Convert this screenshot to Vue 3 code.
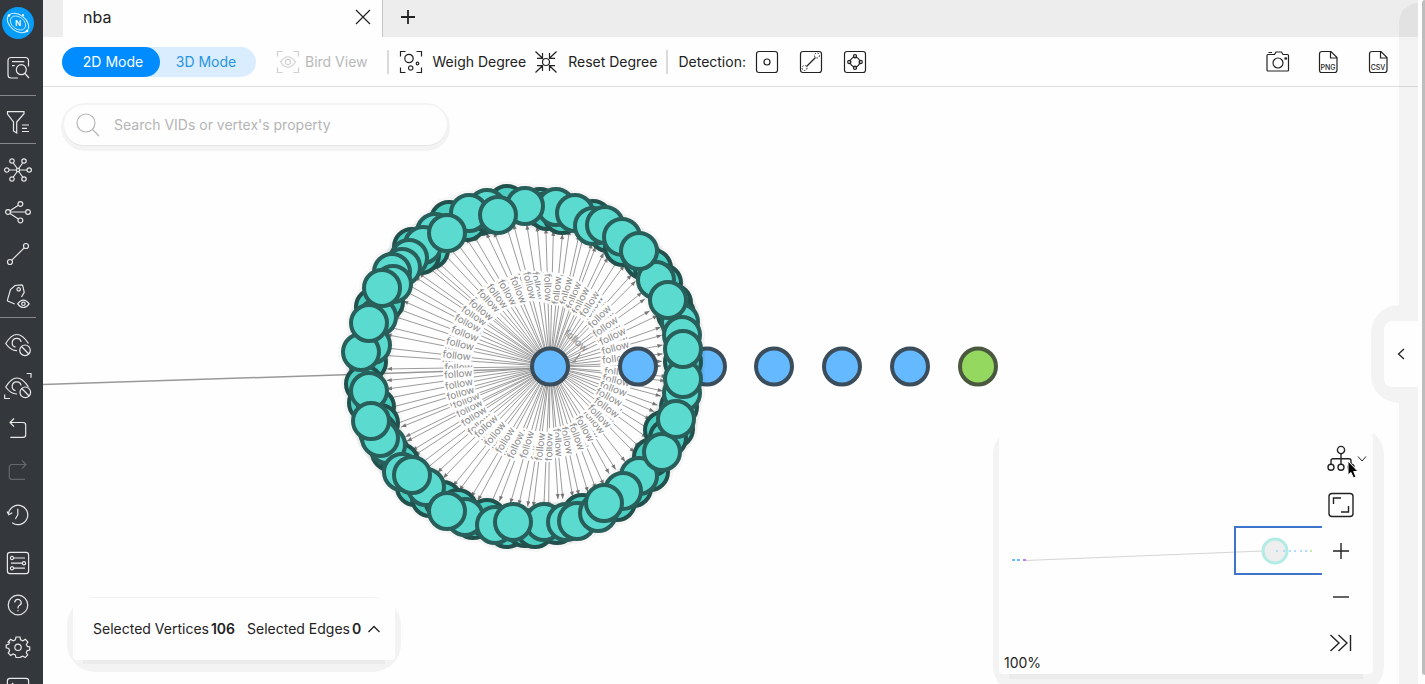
<script setup>
import { ref } from 'vue'

const search = ref('')

const c = (x, y, r) => `M${x - r} ${y}a${r} ${r} 0 1 0 ${2 * r} 0a${r} ${r} 0 1 0 ${-2 * r} 0`

const sideGroups = [
  [
    {
      label: 'Query',
      paths: ['M26.5 14.5V8.5a3 3 0 0 0-3-3H9a3 3 0 0 0-3 3V23a3 3 0 0 0 3 3h7', 'M10 9.7h12.3M10 13.7h2.7', c(19.3, 17.7, 5), 'M23 21.5l4 4.5'],
    },
  ],
  [{ label: 'Filter', paths: ['M5.5 5.7H22v2L14.7 16v11l-3.2-2V16L5.5 8z', 'M20 19h7M20 22.3h5M20 25.5h7'] }],
  [
    {
      label: 'Expand',
      paths: [c(10, 7, 2.2), c(22, 7, 2.2), c(4.8, 16, 2.2), c(27.2, 16, 2.2), c(10, 25, 2.2), c(22, 25, 2.2), c(16, 16, 1.6), 'M7 16h7.4M17.6 16H25M11.3 9l4 5.5M20.7 9l-4 5.5M11.3 23l4-5.5M20.7 23l-4-5.5'],
    },
    { label: 'Common neighbors', paths: [c(6, 16, 2.4), c(18.4, 8, 2.4), c(26, 16, 2.4), c(18.4, 24.4, 2.4), 'M8.4 16h15.2M8 14.7l8.4-5.4M8 17.4l8.4 5.6'] },
    { label: 'Find path', paths: [c(24, 8, 2.5), c(8, 24, 2.5), 'M22.2 9.8L9.8 22.2'] },
    {
      label: 'Vertex style',
      paths: ['M12.7 24l-6.5-2.7a1 1 0 0 1-.7-1.4L8.5 9.5 13 5.5l6.7-.7q1 0 1.1 1l1.4 6.5-2.7 4.7', c(16.7, 9.3, 1.7), 'M15.6 23.8q5.8-7.4 11.6 0q-5.8 7.4-11.6 0z', c(21.4, 23.8, 1.7)],
    },
  ],
  [
    {
      label: 'Hide selected',
      paths: ['M15 22.6C10.5 22.8 6.5 19.5 3.7 15.5Q14.7-2.5 26.5 15.5', 'M13.5 19.2a4.5 4.5 0 1 1 5.6-5.2', c(23, 22.3, 5.3), 'M19.5 18.5l7.3 7.5'],
    },
    {
      label: 'Hide unselected',
      paths: ['M15 24C10.5 24 6.5 21 3.7 17Q14.7-1 26.5 17', 'M13.5 20.7a4.5 4.5 0 1 1 5.6-5.2', c(23.3, 22.3, 5.3), 'M19.8 18.5l7.3 7.5', 'M24.7 3.5H29v4.3M2.7 24.5v4H8'],
    },
    { label: 'Undo', paths: ['M12 6.5l-4 4 4 4.2M8 10.5h13q2.7 0 2.7 2.7v9.5q0 2.7-2.7 2.7H8.3'] },
    { label: 'Redo', dim: true, paths: ['M20 6.5l4 4-4 4.2M24 10.5H10q-2.7 0-2.7 2.7v9.5q0 2.7 2.7 2.7h13'] },
  ],
  [
    { label: 'History', paths: ['M6.4 15a9.7 9.7 0 1 1 3.8 8.7', 'M5 12.5l1.8 3.2 3.5-2', 'M15.8 9.7v6l-2.4 4.3'] },
  ],
  [
    { label: 'Snapshots', paths: ['M8 5.4h16q2.6 0 2.6 2.6v16q0 2.6-2.6 2.6H8q-2.6 0-2.6-2.6V8q0-2.6 2.6-2.6z', c(10, 11, 1.6), c(22, 16.2, 1.6), c(10, 21.2, 1.6), 'M11.6 11H23M9 16.2h11.4M11.6 21.2H23'] },
    { label: 'Help', paths: [c(16, 16, 9.8), 'M12.8 13.6a3.2 3.2 0 1 1 4.8 2.7q-1.6.9-1.6 2.5v.6', 'M16 21v1.2'] },
    {
      label: 'Settings',
      paths: ['M14 6h4l.6 2.8 2.3 1 2.5-1.5 2.5 2.7-1.5 2.4.9 2 2.4.6v3l-2.5.6-.9 2.1 1.4 2.3-2.5 2.6-2.4-1.5-2.2 1L18 26.5h-4l-.7-2.5-2.2-1-2.4 1.5-2.5-2.6 1.4-2.3-.9-2.1-2.5-.6v-3l2.5-.6.9-2L6.1 11l2.5-2.7 2.5 1.5 2.3-1z', c(16, 16.3, 3.2)],
    },
    { label: 'Console', paths: ['M8 5.4h16q2.6 0 2.6 2.6v16q0 2.6-2.6 2.6H8q-2.6 0-2.6-2.6V8q0-2.6 2.6-2.6z', 'M10 10l3 3-3 3'] },
  ],
]

const box = 'M8 5.5h16q2.5 0 2.5 2.5v16q0 2.5-2.5 2.5H8q-2.5 0-2.5-2.5V8q0-2.5 2.5-2.5z'
const corners = 'M5.5 10.5v-5h5M21.5 5.5h5v5M26.5 21.5v5h-5M10.5 26.5h-5v-5'
const icons = {
  bird: [corners, 'M8.5 16q7.5-10.5 15 0q-7.5 10.5-15 0z', c(16, 16, 2.6)],
  weigh: [corners, c(14, 12.5, 4.2), c(22.5, 17.5, 1.3), c(15.7, 22, 2.2)],
  reset: [c(16, 16, 3.5), 'M5.5 5.5l7 6.8M12.5 7v5.3H7M26.5 5.5l-7 6.8M19.5 7v5.3H25M5.5 26.5l7-6.8M12.5 25v-5.3H7M26.5 26.5l-7-6.8M19.5 25v-5.3H25'],
  isolated: [box, c(16, 16, 3)],
  edge: [box, 'M11.5 20.5l9-9'],
  loop: [box, c(16, 16, 4.8), c(16, 10.3, 1.6), c(16, 21.7, 1.6), c(10.3, 16, 1.6), c(21.7, 16, 1.6)],
  camera: ['M12.5 8.5l1.5-2.5h5.5l1.5 2.5h4.5a1 1 0 0 1 1 1V24a1 1 0 0 1-1 1H6a1 1 0 0 1-1-1V9.5a1 1 0 0 1 1-1zM6.5 6.5H10', c(16, 17, 5), 'M23 12h1.5v1H23z'],
  file: ['M9.5 5.5h9.5l6 6V24q0 2.5-2.5 2.5h-13Q7.5 26.5 7.5 24V8q0-2.5 2.5-2.5zM18.5 6v6H25'],
  fit: ['M7 4.5h18q3 0 3 3v17q0 3-3 3H7q-3 0-3-3v-17q0-3 3-3z', 'M8.5 15V9h7.5M23.5 17v6H16'],
  plus: ['M8 16h16M16 8v16'],
  minus: ['M8 16h16'],
  collapse: ['M5.5 8l8.5 8-8.5 8M13.5 8l8.5 8-8.5 8M25.5 8v16'],
  close: ['M9 9l14 14M23 9L9 23'],
  tree: [c(16, 7, 3.6), c(6, 24.3, 3), c(16, 24.3, 3), c(26, 24.3, 3), 'M16 10.6v10.7M6 21.3v-3.5q0-2 2-2h16q2 0 2 2v3.5'],
}

const detections = [
  { key: 'isolated', label: 'Isolated vertices' },
  { key: 'edge', label: 'Dangling edges' },
  { key: 'loop', label: 'Loops' },
]

const hub = [550, 366.5]
const back = [
  [507, 204], [480, 216], [467, 222], [449, 220], [412, 247], [430, 250], [385, 302], [374, 307], [368, 362],
  [364, 384], [367, 403], [376, 407], [380, 423], [390, 452], [400, 462], [415, 487], [430, 498], [443, 500],
  [458, 508], [473, 520], [487, 518], [507, 529], [525, 528], [535, 529], [557, 525], [582, 513], [617, 502],
  [633, 488], [650, 472], [652, 457], [663, 430], [675, 429], [679, 407], [540, 207], [547, 211], [562, 215],
  [593, 219], [608, 233], [623, 247], [643, 260], [653, 268], [663, 283], [673, 303], [676, 314], [683, 362],
  [378, 432], [668, 438], [490, 214], [421, 255],
]
const front = [
  [487, 208], [469, 213], [435, 232], [423, 245], [409, 258], [402, 267], [392, 272], [393, 284], [378, 317],
  [372, 345], [361, 352], [369, 323], [382, 288], [447, 233], [556, 207], [525, 206], [498, 215], [575, 213],
  [593, 226], [605, 225], [622, 237], [656, 280], [639, 251], [680, 322], [668, 300], [682, 335], [682, 393],
  [683, 379], [683, 349], [369, 391], [387, 445], [380, 438], [371, 421], [402, 472], [426, 487], [412, 475],
  [465, 517], [447, 511], [495, 525], [544, 522], [513, 522], [566, 522], [577, 521], [598, 513], [639, 476],
  [623, 491], [604, 503], [662, 452], [676, 419],
]

const edgeCount = 98
const edges = Array.from({ length: edgeCount }, (_, i) => {
  const step = (i * 37) % edgeCount
  const angle = ((step + 0.6 * Math.sin(i * 7)) / edgeCount) * 2 * Math.PI
  const radius = 157 + ((i * 5) % 7)
  const dx = 524 + radius * Math.cos(angle) - hub[0]
  const dy = 366 + radius * Math.sin(angle) - hub[1]
  const len = Math.hypot(dx, dy)
  const k = (len - 20) / len
  let turn = (Math.atan2(dy, dx) * 180) / Math.PI
  const arrow = turn
  if (turn > 90) turn -= 180
  if (turn < -90) turn += 180
  return {
    x: hub[0] + dx * k,
    y: hub[1] + dy * k,
    arrow,
    turn,
    mx: hub[0] + dx / 2,
    my: hub[1] + dy / 2,
  }
})
const chain = [638, 774, 842, 910]
const miniDots = [1276, 1283, 1289, 1294, 1300, 1305]
</script>

<template>
  <div class="app">
    <nav class="sidebar" aria-label="Tools">
      <a class="logo" href="#" aria-label="Home">
        <svg width="32" height="32" viewBox="0 0 32 32">
          <circle cx="16" cy="16" r="16" fill="#069cf8" />
          <g fill="none" stroke="#d8f1ff" transform="rotate(38 16 16)">
            <ellipse cx="16" cy="16" rx="12" ry="8" />
            <ellipse cx="16" cy="16" rx="8.5" ry="6" stroke-width=".8" />
          </g>
          <circle cx="7" cy="8.5" r="1.3" fill="#fff" />
          <circle cx="21" cy="8" r="1.1" fill="#fff" />
          <circle cx="25" cy="24" r="1.3" fill="#fff" />
          <text x="16" y="19" text-anchor="middle" class="logo-letter">N</text>
        </svg>
      </a>
      <div v-for="(group, i) in sideGroups" :key="i" class="group" :class="'group-' + i">
        <button v-for="item in group" :key="item.label" type="button" class="side-btn" :class="{ dim: item.dim }" :aria-label="item.label">
          <svg class="icon" viewBox="0 0 32 32"><path v-for="d in item.paths" :key="d" :d="d" /></svg>
        </button>
      </div>
    </nav>

    <main class="main">
      <header class="tabs">
        <div class="tab">
          <span>nba</span>
          <button type="button" class="icon-btn" aria-label="Close tab">
            <svg class="icon" viewBox="0 0 32 32"><path v-for="d in icons.close" :key="d" :d="d" /></svg>
          </button>
        </div>
        <button type="button" class="icon-btn add" aria-label="New tab">
          <svg class="icon" viewBox="0 0 32 32"><path d="M9 17h14M16 10v14" /></svg>
        </button>
      </header>

      <div class="toolbar">
        <div class="modes">
          <button type="button" class="mode active">2D Mode</button>
          <button type="button" class="mode">3D Mode</button>
        </div>
        <button type="button" class="tool bird" disabled>
          <svg class="icon" viewBox="0 0 32 32"><path v-for="d in icons.bird" :key="d" :d="d" /></svg>Bird View
        </button>
        <i class="rule"></i>
        <button type="button" class="tool">
          <svg class="icon" viewBox="0 0 32 32"><path v-for="d in icons.weigh" :key="d" :d="d" /></svg>Weigh Degree
        </button>
        <button type="button" class="tool">
          <svg class="icon" viewBox="0 0 32 32"><path v-for="d in icons.reset" :key="d" :d="d" /></svg>Reset Degree
        </button>
        <i class="rule"></i>
        <span class="detect">Detection:</span>
        <button v-for="item in detections" :key="item.key" type="button" class="icon-btn detect-btn" :aria-label="item.label">
          <svg class="icon" viewBox="0 0 32 32">
            <path v-for="d in icons[item.key]" :key="d" :d="d" />
            <g v-if="item.key === 'edge'" stroke-dasharray="1.5 1.5" stroke-width="1"><circle cx="22" cy="9.5" r="2.5" /><circle cx="9.5" cy="22" r="2.5" /></g>
          </svg>
        </button>
        <div class="exports">
          <button type="button" class="icon-btn" aria-label="Screenshot">
            <svg class="icon" viewBox="0 0 32 32"><path v-for="d in icons.camera" :key="d" :d="d" /></svg>
          </button>
          <button v-for="kind in ['PNG', 'CSV']" :key="kind" type="button" class="icon-btn" :aria-label="'Export ' + kind">
            <svg class="icon" viewBox="0 0 32 32">
              <path v-for="d in icons.file" :key="d" :d="d" />
              <text x="16" y="24" text-anchor="middle" class="file-kind">{{ kind }}</text>
            </svg>
          </button>
        </div>
      </div>

      <section class="canvas">
        <svg class="graph">
          <g transform="translate(-43 -87)">
            <path d="M43 384.5L550 368" stroke="#999" stroke-width="1.5" />
            <g v-for="(e, i) in edges" :key="'e' + i">
              <path :d="`M550 366.5L${e.x} ${e.y}`" stroke="#909090" stroke-width=".9" />
              <path d="M0 0l-5-2v4z" fill="#777" :transform="`translate(${e.x} ${e.y}) rotate(${e.arrow})`" />
            </g>
            <g v-for="(e, i) in edges" :key="'l' + i" :transform="`translate(${e.mx} ${e.my}) rotate(${e.turn})`">
              <rect x="-15" y="-6" width="30" height="12" fill="#fefefe" />
              <text y="3" text-anchor="middle" class="edge-label">follow</text>
            </g>
            <g transform="translate(576 341) rotate(42)">
              <text y="3" text-anchor="middle" class="edge-label">follow</text>
            </g>
            <path d="M581 352q-1 6-11 11l7-1-2-3z" fill="#888" />
            <g class="node">
              <g class="blue">
                <circle cx="707" cy="366.5" r="18" />
                <circle v-for="x in chain" :key="x" :cx="x" cy="366.5" r="18" />
                <circle cx="550" cy="366.5" r="18" />
              </g>
              <circle class="green" cx="978" cy="366.5" r="18" />
              <circle v-for="(p, i) in [...back, ...front]" :key="'h' + i" class="glow" :cx="p[0]" :cy="p[1]" r="20" />
              <circle v-for="(p, i) in back" :key="'b' + i" class="teal-back" :cx="p[0]" :cy="p[1]" r="18" />
              <circle v-for="(p, i) in front" :key="'f' + i" class="teal" :cx="p[0]" :cy="p[1]" r="18" />
            </g>
          </g>
        </svg>

        <label class="search halo">
          <svg class="icon" viewBox="0 0 32 32"><circle cx="14" cy="14" r="9" /><path d="M20.5 20.5l6.5 6.5" /></svg>
          <input v-model="search" type="text" placeholder="Search VIDs or vertex's property" aria-label="Search" />
        </label>

        <div class="selection halo">
          <span>Selected Vertices<b>106</b></span>
          <span class="second">Selected Edges<b>0</b></span>
          <button type="button" class="chev" aria-label="Show selection">
            <svg width="14" height="14" viewBox="0 0 14 14"><path d="M1.5 10L7 4.5l5.5 5.5" /></svg>
          </button>
        </div>

        <div class="minimap halo">
          <div class="overview">
            <svg class="overview-map">
              <g transform="translate(-999 -435)">
                <path d="M1025 560.5L1263 551" stroke="#d5d5d5" />
                <rect x="1012" y="559" width="3" height="2" fill="#6bbcf7" />
                <rect x="1017" y="559" width="3" height="2" fill="#6bbcf7" />
                <rect x="1023" y="559" width="3" height="2" fill="#b77df0" />
                <circle cx="1275" cy="551" r="12" fill="#eee" stroke="#b3ebe5" stroke-width="3" />
                <rect v-for="x in miniDots" :key="x" :x="x" y="550" width="2" height="2" fill="#b1dcfb" />
                <rect x="1310" y="550" width="2" height="2" fill="#c4eaa8" />
                <path d="M1325 527h-90v47h90" fill="none" stroke="#3f74cc" stroke-width="2" />
              </g>
            </svg>
            <span class="scale">100%</span>
          </div>
          <div class="controls">
            <button type="button" class="layout-btn" aria-label="Layout">
              <svg class="icon" viewBox="0 0 32 32"><path v-for="d in icons.tree" :key="d" :d="d" /></svg>
              <svg class="caret" width="10" height="8" viewBox="0 0 10 8"><path d="M1 1.5L5 6l4-4.5" /></svg>
              <svg class="cursor" width="12" height="20" viewBox="0 0 12 20"><path d="M1 1v14l3-2.5L6.5 18l2.5-1-2.3-5.5H11z" /></svg>
            </button>
            <button v-for="k in ['fit', 'plus', 'minus', 'collapse']" :key="k" type="button" :aria-label="k">
              <svg class="icon" viewBox="0 0 32 32"><path v-for="d in icons[k]" :key="d" :d="d" /></svg>
            </button>
          </div>
        </div>
      </section>
    </main>

    <aside class="edge">
      <div class="drawer">
        <button type="button" class="handle" aria-label="Open panel">
          <svg width="10" height="14" viewBox="0 0 10 14"><path d="M8 2L2.5 7 8 12" /></svg>
        </button>
      </div>
      <div class="scrollbar"></div>
    </aside>
  </div>
</template>

<style>
body { overflow: hidden; }
</style>

<style scoped>
.app {
  position: relative;
  display: flex;
  height: 100vh;
  overflow: hidden;
  background: #fefefe;
  color: #222;
  font: 14px/20px Inter, "Liberation Sans", sans-serif;
}
button { display: flex; align-items: center; justify-content: center; padding: 0; border: 0; background: none; color: inherit; font: inherit; }
svg { display: block; }
.icon { flex: none; width: 32px; height: 32px; fill: none; stroke: currentColor; stroke-width: 1.2; }
.sidebar { flex: none; width: 43px; overflow: hidden; background: #34373c; color: #e8e8e8; }
.logo { display: flex; align-items: center; width: 32px; height: 46px; padding: 0 2px 1px; box-sizing: content-box; }
.logo-letter { fill: #fff; font-size: 8px; font-weight: 600; }
.group { width: 36px; }
.side-btn { width: 36px; height: 42px; }
.dim { color: #64676b; }
.group-0 { padding-bottom: 6px; }
.group-0, .group-1, .group-2 { border-bottom: 1px solid #85878a; }
.group-1, .group-2, .group-3 { padding-top: 5px; }
.group-4 { padding: 3px 0; }
.group-5 { padding-top: 3px; }
.main { display: flex; flex: 1; flex-direction: column; min-width: 0; }
.tabs { display: flex; flex: none; height: 37px; margin-right: 7px; padding-left: 20px; background: #ededed; }
.tab { display: flex; align-items: center; justify-content: space-between; width: 320px; padding: 0 3px 4px 20px; box-sizing: border-box; background: #fefefe; border-right: 1px solid #c4c4c4; font-size: 16px; }
.icon-btn { width: 32px; height: 32px; }
.add { margin-left: 9px; }
.add .icon { stroke-width: 1.8; }
.toolbar { display: flex; flex: none; align-items: center; height: 49px; margin-right: 7px; padding-left: 19px; border-bottom: 1px solid #dedede; white-space: nowrap; }
.modes { display: flex; width: 194px; height: 30px; border-radius: 15px; background: #daedff; }
.mode { flex: 1; padding-right: 4px; border-radius: 15px; color: #2795dd; }
.mode.active { flex: none; width: 98px; padding: 0 0 0 4px; background: #008cff; color: #fff; }
.tool { gap: 6px; margin-left: 4px; }
.bird { gap: 1px; margin-left: 16px; color: #b8b8b8; }
.bird .icon { color: #d0d0d0; }
.rule { width: 2px; height: 24px; margin-left: 19px; background: #dadada; }
.rule + .tool { margin-left: 6px; }
.tool + .tool + .rule { margin-left: 9px; }
.detect { margin: 0 5px 0 10px; }
.detect-btn { margin-right: 12px; }
.exports { display: flex; gap: 18px; margin-left: auto; padding-right: 24px; }
.file-kind { fill: #222; stroke: none; font-size: 7px; font-weight: 500; }
.canvas { position: relative; flex: 1; overflow: hidden; isolation: isolate; }
.graph { position: absolute; inset: 0; z-index: -2; width: 100%; height: 100%; }
.edge-label { fill: #8a8a8a; font-size: 10px; }
.node circle { stroke: #3b4d5a; stroke-width: 4; }
.blue { fill: #65baff; }
.node .green { fill: #94d860; stroke: #49583f; }
.node .glow { fill: none; stroke: #000; stroke-opacity: .03; stroke-width: 6; }
.node .teal { fill: #5bdacf; stroke: #285f5b; }
.node .teal-back { fill: #4ccfc3; stroke: #22504c; }
.halo { position: absolute; background: #fefefe; }
.halo::before { position: absolute; z-index: -1; content: ""; background: #f3f3f3; }
.search { top: 18px; left: 21px; display: flex; align-items: center; width: 383px; height: 40px; padding: 0 16px 0 8px; box-sizing: border-box; border-radius: 20px; color: #b5b5b5; box-shadow: 0 1px 0 #e6e6e6; }
.search::before { inset: -2px -3px -6px; border-radius: 24px; }
.search input { flex: 1; min-width: 0; margin-left: 10px; padding: 0; border: 0; outline: 0; background: none; font: inherit; }
.search input::placeholder { color: #b5b5b5; opacity: 1; }
.selection { bottom: 24px; left: 30px; display: flex; align-items: center; width: 322px; height: 62px; padding: 0 14px 0 20px; box-sizing: border-box; border-radius: 4px; box-shadow: 0 14px 0 -10px #ebebeb; white-space: nowrap; }
.selection::before { inset: -1px -6px -12px; border-radius: 28px; }
.selection b { margin-left: 2px; font-weight: 600; }
.second { margin-left: 12px; }
.chev { margin-left: auto; }
.chev path, .caret path, .handle path { fill: none; stroke: #222; stroke-width: 1.3; }
.caret path { stroke-width: 1; }
.minimap { right: 52px; bottom: 10px; display: flex; width: 374px; height: 239px; border-radius: 4px; box-shadow: 0 15px 0 -10px #ebebeb; }
.minimap::before { inset: -8px -11px -20px -6px; border-radius: 28px; }
.minimap::after { position: absolute; inset: -8px 0 100%; content: ""; background: #fefefe; }
.overview { position: relative; display: flex; flex: 1; align-items: flex-end; }
.overview-map { position: absolute; inset: 0; width: 100%; height: 100%; }
.scale { padding: 0 5px 1px; }
.controls { width: 51px; padding-top: 1px; }
.controls button { position: relative; width: 38px; height: 46px; }
.controls .icon { stroke-width: 1.4; }
.caret { position: absolute; top: 19px; right: -7px; }
.cursor { position: absolute; top: 24px; right: 1px; fill: #000; stroke: #fff; stroke-width: 1; }
.edge { position: absolute; top: 0; right: 0; display: flex; width: 26px; height: 100%; isolation: isolate; }
.drawer { display: flex; width: 19px; margin-top: 3px; border-radius: 19px 0 0; background: rgba(0, 0, 0, .043); }
.handle { position: relative; flex: none; width: 34px; height: 66px; margin: 318px 0 0 -15px; border-radius: 8px 0 0 8px; background: #fefefe; }
.handle::before { position: absolute; top: -16px; bottom: -16px; left: -13px; z-index: -1; width: 28px; content: ""; background: #f3f3f3; border-radius: 28px 0 0 28px; }
.scrollbar { width: 3px; height: 675px; max-height: 99%; margin-left: auto; border-radius: 3px 0 0 3px; background: #bdbdbd; }
</style>
